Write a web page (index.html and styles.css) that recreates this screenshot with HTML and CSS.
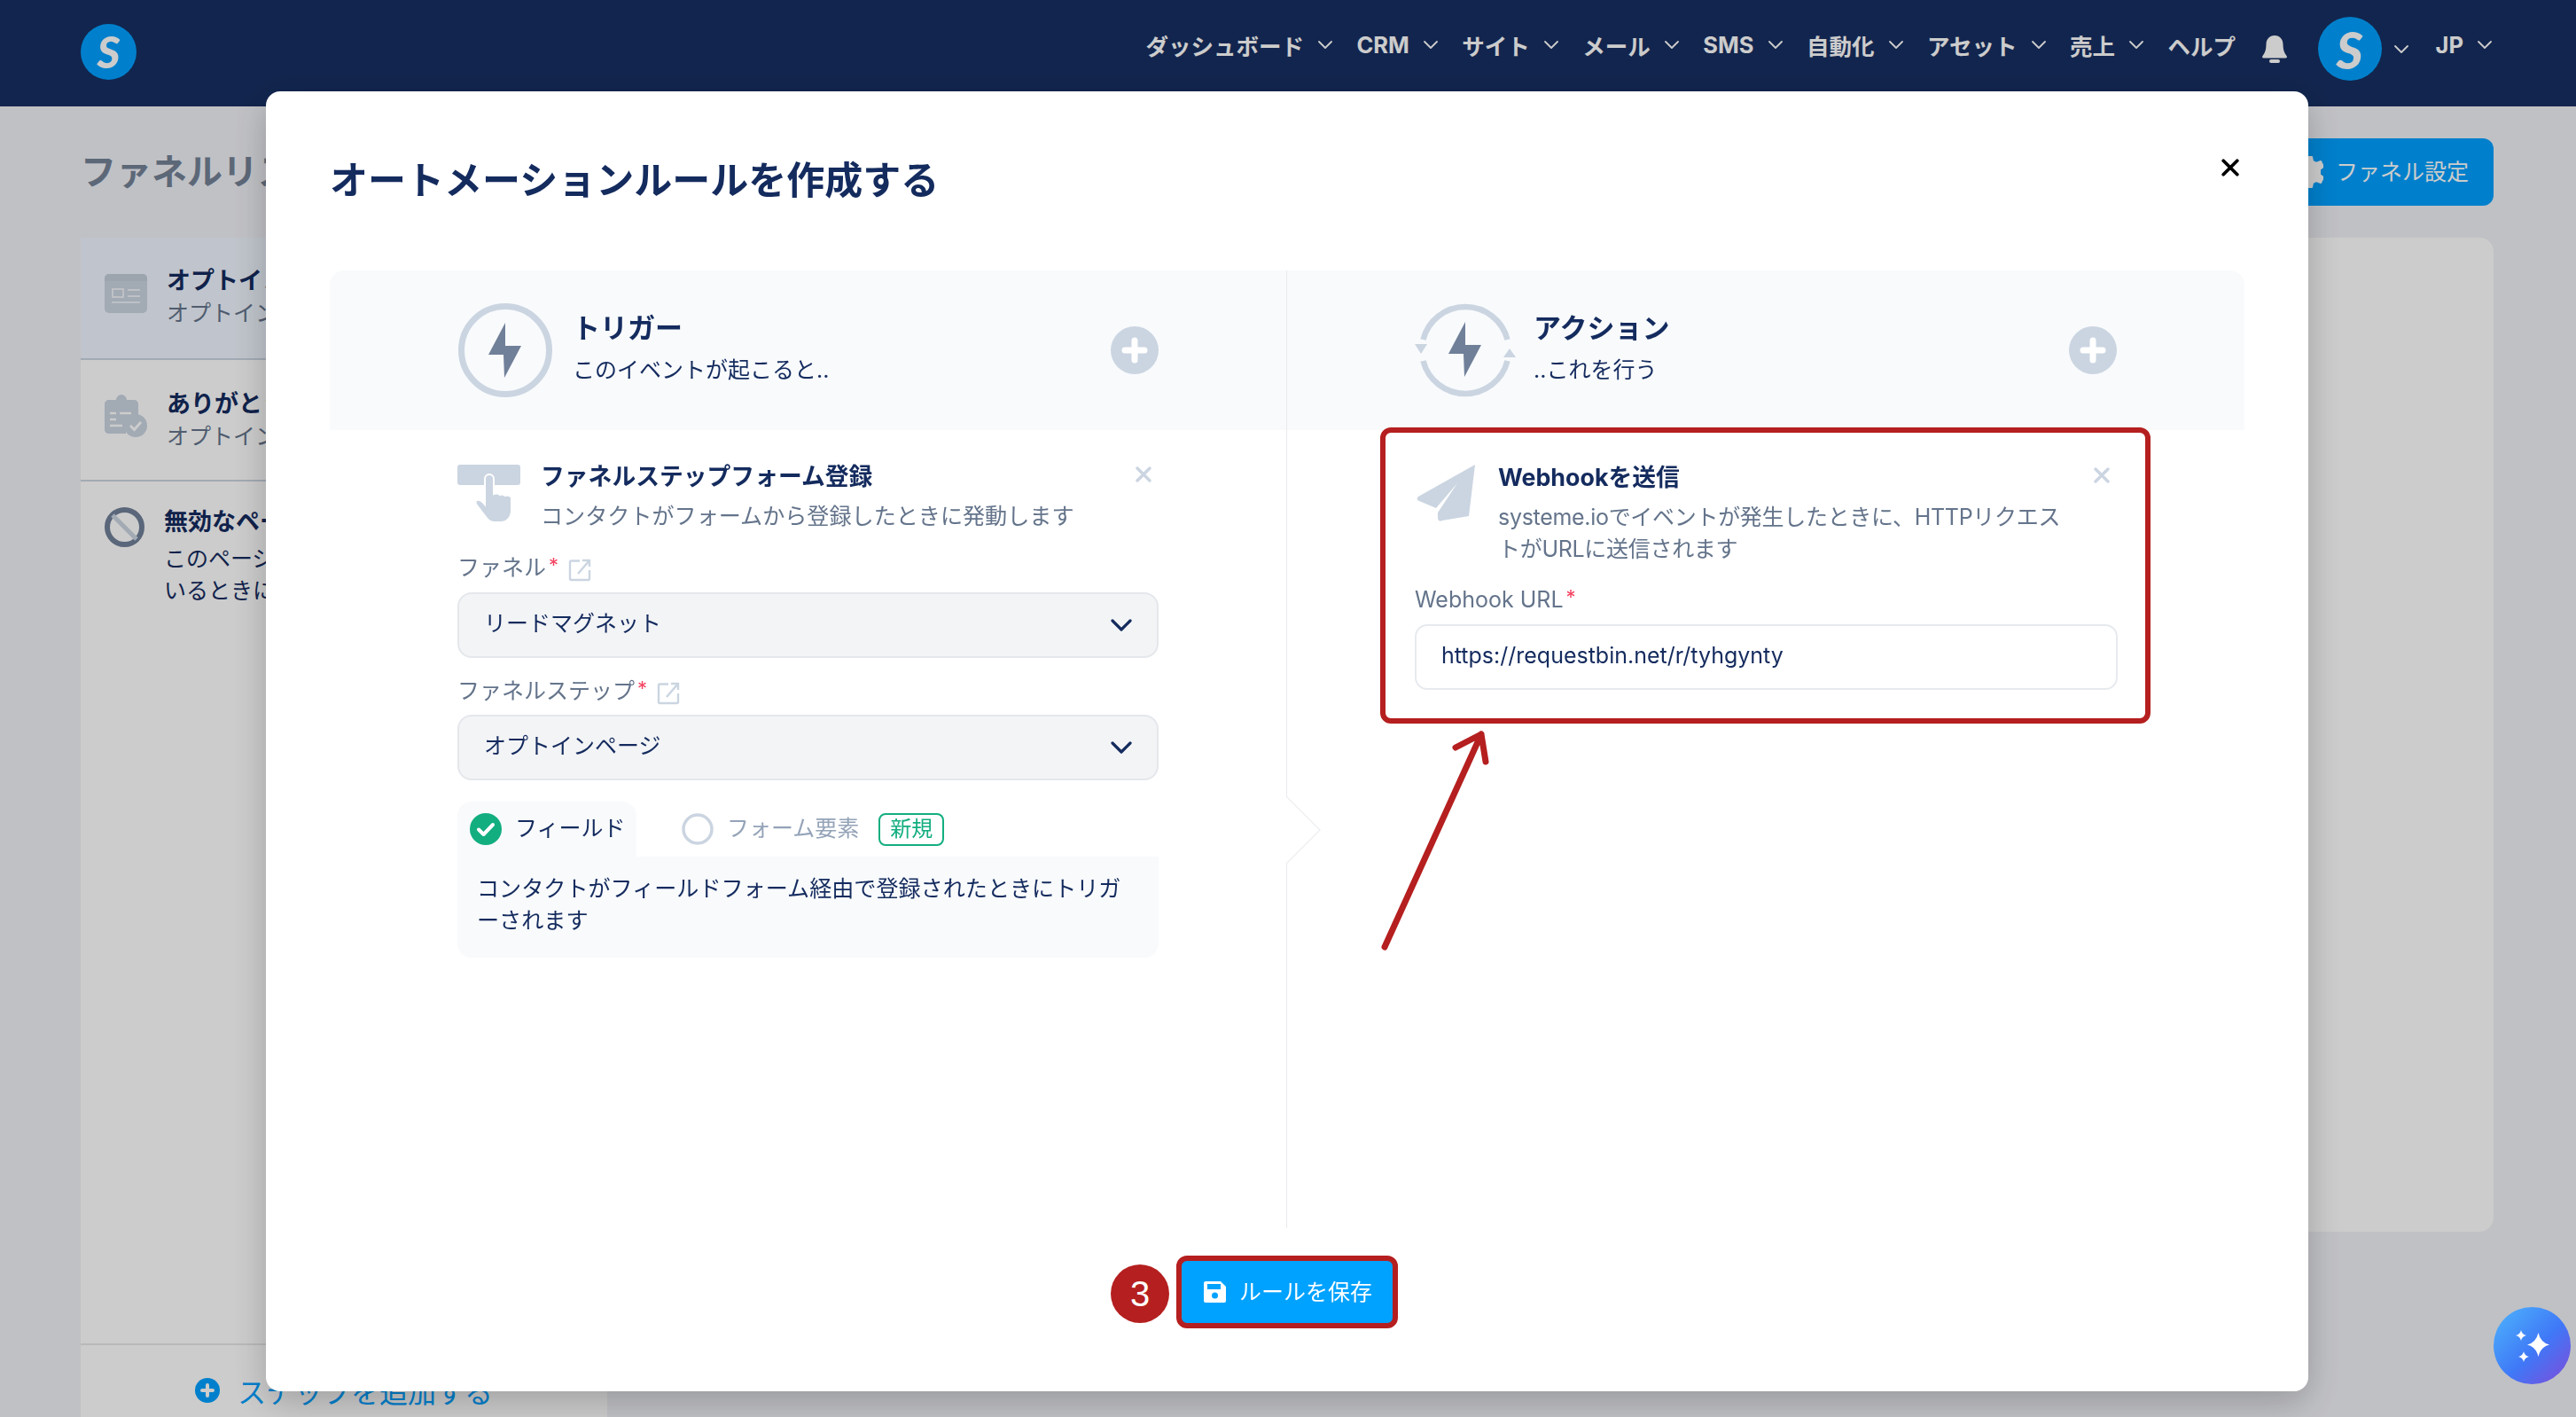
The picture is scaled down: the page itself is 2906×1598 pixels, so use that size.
FILE: index.html
```html
<!DOCTYPE html>
<html lang="ja">
<head>
    <meta charset="UTF-8">
    <meta name="viewport" content="width=device-width, initial-scale=1.0">
    <title>オートメーションルールを作成する</title>
    <link rel="stylesheet" href="styles.css">
</head>
<body>
    <svg class="icon-defs" aria-hidden="true">
        <symbol id="i-chev" viewBox="0 0 16 9"><polyline points="1,1 8,8 15,1" fill="none" stroke="currentColor" stroke-width="1.800" stroke-linecap="round" stroke-linejoin="round"/></symbol>
        <symbol id="i-close" viewBox="0 0 18 18"><path d="M2 2L16 16M16 2L2 16" fill="none" stroke="currentColor" stroke-width="3.400" stroke-linecap="round"/></symbol>
        <symbol id="i-plus" viewBox="0 0 54 54"><circle cx="27" cy="27" r="27" fill="#cbd5e1"/><path d="M27 16V38M16 27H38" stroke="#fff" stroke-width="7" stroke-linecap="round"/></symbol>
        <symbol id="i-ext" viewBox="0 0 26 26"><path d="M13 2.500H3.500a1.500 1.500 0 0 0-1.500 1.500V22.500A1.500 1.500 0 0 0 3.500 24H22.500A1.500 1.500 0 0 0 24 22.500V13M24 2L11 17M16 2H24V9" fill="none" stroke="#cbd5e1" stroke-width="2.400"/></symbol>
        <symbol id="i-select" viewBox="0 0 24 14"><polyline points="2,2 12,12 22,2" fill="none" stroke="#142b5e" stroke-width="3.200" stroke-linecap="round" stroke-linejoin="round"/></symbol>
    </svg>

    <header class="topbar">
        <div class="logo">S</div>
        <nav class="nav">
            <div class="nav-item">ダッシュボード<svg class="chev"><use href="#i-chev"/></svg></div>
            <div class="nav-item">CRM<svg class="chev"><use href="#i-chev"/></svg></div>
            <div class="nav-item">サイト<svg class="chev"><use href="#i-chev"/></svg></div>
            <div class="nav-item">メール<svg class="chev"><use href="#i-chev"/></svg></div>
            <div class="nav-item">SMS<svg class="chev"><use href="#i-chev"/></svg></div>
            <div class="nav-item">自動化<svg class="chev"><use href="#i-chev"/></svg></div>
            <div class="nav-item">アセット<svg class="chev"><use href="#i-chev"/></svg></div>
            <div class="nav-item">売上<svg class="chev"><use href="#i-chev"/></svg></div>
            <div class="nav-item">ヘルプ</div>
            <svg class="bell" viewBox="0 0 30 33"><path d="M15 1c-6 0-9.500 4.500-9.500 10 0 6-1.500 10-4 13-1 1.300-.3 2.500 1 2.500h25c1.300 0 2-1.200 1-2.500-2.500-3-4-7-4-13C24.500 5.500 21 1 15 1z" fill="#fff"/><rect x="9" y="28" width="12" height="4" rx="2" fill="#fff"/></svg>
            <div class="nav-item user"><div class="avatar">S</div><svg class="chev"><use href="#i-chev"/></svg></div>
            <div class="nav-item">JP<svg class="chev"><use href="#i-chev"/></svg></div>
        </nav>
    </header>

    <div class="page-head">
        <h1>ファネルリスト</h1>
        <button class="settings-btn">
            <svg class="gear" viewBox="0 0 34 36"><path d="M14 1h7l1 5 4 2 5-2 3 6-4 3v6l4 3-3 6-5-2-4 2-1 5h-7l-1-5-4-2-5 2-3-6 4-3v-6l-4-3 3-6 5 2 4-2z" fill="#fff" stroke="#fff" stroke-width="2" stroke-linejoin="round"/></svg>
            <span class="btn-text">ファネル設定</span>
        </button>
    </div>

    <div class="page-main">
        <aside class="sidebar">
            <div class="step step-active">
                <svg class="step-icon form-icon" viewBox="0 0 48 44"><rect width="48" height="44" rx="5" fill="#cbd5e1"/><path d="M0 5a5 5 0 0 1 5-5h38a5 5 0 0 1 5 5v3H0z" fill="#c3cdda"/><rect x="9" y="17" width="12" height="9" fill="none" stroke="#eef2f7" stroke-width="2"/><path d="M26 18H40M26 25H40M8 32H40" stroke="#eef2f7" stroke-width="2"/></svg>
                <div class="step-text">
                    <div class="step-name">オプトインページ</div>
                    <div class="step-type">オプトインページ</div>
                </div>
            </div>
            <div class="step step-thanks">
                <svg class="step-icon" viewBox="0 0 48 48"><path d="M5 6h8c0-3 3-6 6-6s6 3 6 6h8c3 0 5 2 5 5v14c-8 0-14 6-14 16v3H5c-3 0-5-2-5-5V11c0-3 2-5 5-5z" fill="#cbd5e1"/><path d="M6 21H13M17 21H30M6 28H13M6 35H20" stroke="#fff" stroke-width="2.500"/><circle cx="35" cy="35" r="13" fill="#cbd5e1"/><path d="M29 35l4.500 4.500L41 31" fill="none" stroke="#fff" stroke-width="3"/></svg>
                <div class="step-text">
                    <div class="step-name">ありがとうページ</div>
                    <div class="step-type">オプトインページ</div>
                </div>
            </div>
            <div class="step step-inactive">
                <svg class="step-icon ban-icon" viewBox="0 0 45 45"><circle cx="22.500" cy="22.500" r="19.500" fill="none" stroke="#718099" stroke-width="6"/><path d="M9 9L36 36" stroke="#cbd5e1" stroke-width="5"/></svg>
                <div class="step-text">
                    <div class="step-name">無効なページ</div>
                    <div class="step-desc">このページはファネルが無効になって<br>いるときに表示されます</div>
                </div>
            </div>
            <div class="add-step">
                <svg class="add-dot" viewBox="0 0 28 28"><circle cx="14" cy="14" r="14" fill="#00a0ff"/><path d="M14 8V20M8 14H20" stroke="#fff" stroke-width="4" stroke-linecap="round"/></svg>
                <span>ステップを追加する</span>
            </div>
        </aside>
        <section class="content-card"></section>
    </div>

    <div class="overlay">
        <div class="modal">
            <div class="modal-head">
                <h2>オートメーションルールを作成する</h2>
                <svg class="modal-close"><use href="#i-close"/></svg>
            </div>

            <div class="rule-grid">
                <div class="rule-col">
                    <div class="col-head">
                        <svg class="col-icon" viewBox="0 0 106 106"><circle cx="53" cy="53" r="49.500" fill="none" stroke="#cbd5e1" stroke-width="7"/><path d="M53 22L34 58H51L52 84L71 48H53z" fill="#718099"/></svg>
                        <div class="col-title">
                            <h3>トリガー</h3>
                            <p>このイベントが起こると..</p>
                        </div>
                        <svg class="col-plus"><use href="#i-plus"/></svg>
                    </div>
                    <div class="col-body">
                        <div class="card-head">
                            <svg class="card-icon" viewBox="0 0 71 66"><rect width="71" height="23" rx="3" fill="#cbd5e1"/><path d="M31 16a5 5 0 0 1 10 0v17c3-1 6 0 7 1 2-1 5 0 6 1 2-1 6 0 7 2v15c0 7-5 13-12 13h-7c-5 0-8-3-10-6L22 46c-2-3-2-5 0-6 2-1 5 0 9 5z" fill="#cbd5e1" stroke="#fff" stroke-width="2"/></svg>
                            <div class="card-text">
                                <h4>ファネルステップフォーム登録</h4>
                                <p>コンタクトがフォームから登録したときに発動します</p>
                            </div>
                            <svg class="card-close"><use href="#i-close"/></svg>
                        </div>
                        <div class="field-label">ファネル<span class="req">*</span><svg class="ext"><use href="#i-ext"/></svg></div>
                        <div class="select"><span class="select-text">リードマグネット</span><svg class="select-chev"><use href="#i-select"/></svg></div>
                        <div class="field-label second">ファネルステップ<span class="req">*</span><svg class="ext"><use href="#i-ext"/></svg></div>
                        <div class="select"><span class="select-text">オプトインページ</span><svg class="select-chev"><use href="#i-select"/></svg></div>
                        <div class="tabs">
                            <div class="tab tab-on">
                                <svg class="tab-radio" viewBox="0 0 36 36"><circle cx="18" cy="18" r="18" fill="#13ae80"/><path d="M10 18.500l5.500 5.500L26 13" fill="none" stroke="#fff" stroke-width="4" stroke-linecap="round" stroke-linejoin="round"/></svg>
                                <span class="tab-text">フィールド</span>
                            </div>
                            <div class="tab tab-off">
                                <svg class="tab-radio" viewBox="0 0 36 36"><circle cx="18" cy="18" r="16" fill="#fff" stroke="#cbd5e1" stroke-width="3.500"/></svg>
                                <span class="tab-text">フォーム要素</span>
                                <span class="badge">新規</span>
                            </div>
                        </div>
                        <div class="tab-panel">コンタクトがフィールドフォーム経由で登録されたときにトリガーされます</div>
                    </div>
                </div>

                <div class="rule-col col-right">
                    <div class="col-head">
                        <svg class="col-icon action-icon" viewBox="0 0 114 108"><path d="M9.500 42A49 49 0 0 1 104.500 42M104.500 66A49 49 0 0 1 9.500 66" fill="none" stroke="#cbd5e1" stroke-width="6.500"/><path d="M0 47H14L7 58zM100 62H114L107 52z" fill="#cbd5e1"/><path d="M57 22L38 58H55L56 84L75 48H57z" fill="#718099"/></svg>
                        <div class="col-title">
                            <h3>アクション</h3>
                            <p>..これを行う</p>
                        </div>
                        <svg class="col-plus"><use href="#i-plus"/></svg>
                    </div>
                    <div class="col-body">
                        <div class="action-card">
                            <div class="card-head">
                                <svg class="card-icon plane-icon" viewBox="0 0 71 66"><path d="M68 1L4 37Q1 40 5 42L24 50L48 22L26 55V62Q27 66 31 64L61 59z" fill="#cbd5e1"/></svg>
                                <div class="card-text">
                                    <h4>Webhookを送信</h4>
                                    <p>systeme.ioでイベントが発生したときに、HTTPリクエストがURLに送信されます</p>
                                </div>
                                <svg class="card-close"><use href="#i-close"/></svg>
                            </div>
                            <div class="field-label url-label">Webhook URL<span class="req">*</span></div>
                            <div class="text-input">https://requestbin.net/r/tyhgynty</div>
                        </div>
                    </div>
                    <svg class="notch" viewBox="0 0 39 76"><path d="M0 1L37 38L0 75z" fill="#fff"/><polyline points="1,1 38,38 1,75" fill="none" stroke="#eef0f3" stroke-width="1.500"/></svg>
                    <svg class="red-arrow" viewBox="0 0 130 255"><path d="M7 248L116 8M87 23L116 8L121 39" fill="none" stroke="#b51f1f" stroke-width="7" stroke-linecap="round" stroke-linejoin="round"/></svg>
                </div>
            </div>

            <div class="modal-foot">
                <div class="save-wrap">
                    <span class="step-no">3</span>
                    <button class="save-btn">
                        <svg class="save-icon" viewBox="0 0 25 24"><path d="M0 2a2 2 0 0 1 2-2h17l6 6v16a2 2 0 0 1-2 2H2a2 2 0 0 1-2-2z" fill="#fff"/><rect x="4" y="3" width="15" height="6" fill="#00a2ff"/><circle cx="12.500" cy="16" r="3.500" fill="#00a2ff"/></svg>
                        <span class="btn-text">ルールを保存</span>
                    </button>
                </div>
            </div>
        </div>
    </div>

    <div class="ai-btn">
        <svg viewBox="0 0 38 36" width="38" height="36"><path d="M25.500 3Q28 14 38 16.500Q28 19 25.500 30Q23 19 13 16.500Q23 14 25.500 3zM6 0Q7 5 12 6Q7 7 6 12Q5 7 0 6Q5 5 6 0zM9 24Q10 29 15 30Q10 31 9 36Q8 31 3 30Q8 29 9 24z" fill="#fff"/></svg>
    </div>
</body>
</html>
```

FILE: styles.css
```css
* {
    box-sizing: border-box;
}
html, body {
    height: 100%;
}
body {
    margin: 0;
    overflow: hidden;
    font-family: Inter, "Noto Sans CJK JP", sans-serif;
    background-color: #f1f2f7;
    color: #142b5e;
}
h1, h2, h3, h4, p {
    margin: 0;
}
.icon-defs {
    display: none;
}

/* Barre du haut */
.topbar {
    display: flex;
    align-items: center;
    height: 120px;
    padding: 0 95px 10px 91px;
    background-color: #172f62;
}
.logo {
    display: flex;
    justify-content: center;
    align-items: center;
    width: 63px;
    height: 63px;
    margin-top: 6px;
    border-radius: 50%;
    background: #00a0ff;
    color: #fff;
    font-family: Lato, sans-serif;
    font-size: 50px;
    font-weight: 900;
    font-style: italic;
}
.nav {
    display: flex;
    align-items: center;
    gap: 27.5px;
    margin-left: auto;
    color: #fff;
    font-size: 25.5px;
    font-weight: 700;
}
.nav-item {
    display: flex;
    align-items: center;
    gap: 16px;
    margin-top: -9px;
}
.nav-item.user {
    margin-top: 0;
    margin-right: 3.5px;
    gap: 14px;
}
.chev {
    flex: none;
    width: 16px;
    height: 9px;
    color: #fff;
}
.bell {
    width: 30px;
    height: 33px;
    margin-left: 1.5px;
    margin-right: 6px;
}
.avatar {
    display: flex;
    justify-content: center;
    align-items: center;
    width: 72px;
    height: 72px;
    border-radius: 50%;
    background: #00a0ff;
    color: #fff;
    font-family: Lato, sans-serif;
    font-size: 58px;
    font-weight: 900;
    font-style: italic;
}

/* Page derriere le modal */
.page-head {
    display: flex;
    justify-content: space-between;
    align-items: center;
    height: 76px;
    margin: 36px 93px 36px 91px;
}
.page-head h1 {
    margin-top: -6px;
    color: #748297;
    font-size: 40px;
    font-weight: 700;
}
.settings-btn {
    display: flex;
    align-items: center;
    gap: 14px;
    height: 76px;
    padding: 0 28px;
    border: none;
    border-radius: 12px;
    background: #00a0ff;
    color: #fff;
    font-family: inherit;
    font-size: 25px;
}
.btn-text {
    margin-top: -4px;
}
.gear {
    width: 34px;
    height: 36px;
}
.page-main {
    display: flex;
    gap: 24px;
    margin: 0 93px 0 91px;
}
.sidebar {
    display: flex;
    flex-direction: column;
    flex: none;
    width: 594px;
    height: 1330px;
    background: #fff;
}
.step {
    display: flex;
    align-items: flex-start;
    gap: 22px;
    padding: 32px 27px 0;
    border-bottom: 2px solid #cbd5e1;
}
.step-active {
    height: 138px;
    background: #f0f6ff;
}
.step-thanks {
    height: 137px;
    padding-top: 33px;
}
.step-inactive {
    flex: 1;
    padding-top: 29px;
    border-bottom: none;
}
.step-icon {
    flex: none;
    width: 48px;
    height: 48px;
    margin-top: 6px;
}
.form-icon {
    height: 44px;
    margin-top: 9px;
}
.ban-icon {
    width: 45px;
    height: 45px;
    margin-top: 0;
}
.step-name {
    font-size: 27px;
    font-weight: 700;
    line-height: 34px;
}
.step-type {
    margin-top: 2px;
    color: #64748b;
    font-size: 25px;
    line-height: 34px;
}
.step-desc {
    margin-top: 6px;
    font-size: 25px;
    line-height: 36px;
}
.add-step {
    display: flex;
    justify-content: center;
    align-items: center;
    gap: 20px;
    height: 83px;
    padding-top: 20px;
    border-top: 2px solid #e8e8e8;
    color: #00a0ff;
    font-size: 32px;
}
.add-dot {
    width: 28px;
    height: 28px;
}
.content-card {
    flex: 1;
    height: 1121px;
    border-radius: 16px;
    background: #fff;
}

/* Modal */
.overlay {
    position: fixed;
    top: 0;
    left: 0;
    width: 100%;
    height: 100%;
    display: flex;
    justify-content: center;
    padding: 103px 2px 29px 0;
    background: rgba(0, 0, 0, 0.2);
}
.modal {
    display: flex;
    flex-direction: column;
    width: 2304px;
    padding: 70px 72px 71px 72px;
    border-radius: 16px;
    background: #fff;
    box-shadow: 0 12px 40px rgba(0, 0, 0, 0.22);
}
.modal-head {
    display: flex;
    justify-content: space-between;
    align-items: flex-start;
    height: 132px;
}
.modal-head h2 {
    font-size: 43px;
    font-weight: 700;
    line-height: 60px;
}
.modal-close {
    width: 20px;
    height: 20px;
    margin: 6px 6px 0 0;
    color: #000;
}
.rule-grid {
    display: grid;
    grid-template-columns: 1079px 1fr;
    flex: 1;
}
.rule-col {
    position: relative;
}
.col-right {
    border-left: 1px solid #e8eaee;
}
.col-head {
    display: flex;
    align-items: center;
    height: 180px;
    padding: 0 144px 0 145px;
    background: #f8fafc;
}
.rule-col:first-child .col-head {
    border-top-left-radius: 16px;
}
.col-right .col-head {
    border-top-right-radius: 16px;
    padding: 0 144px 0 144px;
}
.col-icon {
    flex: none;
    width: 106px;
    height: 106px;
    margin-right: 23px;
}
.action-icon {
    width: 114px;
    height: 108px;
    margin-right: 20px;
}
.col-title {
    flex: 1;
    margin-top: -6px;
}
.col-title h3 {
    font-size: 31px;
    font-weight: 700;
    line-height: 40px;
}
.col-title p {
    margin-top: 9px;
    font-size: 25px;
    line-height: 36px;
}
.col-plus {
    width: 54px;
    height: 54px;
}
.col-body {
    padding: 34px 144px 0 144px;
}
.col-right .col-body {
    padding: 0 106px 0 105px;
}
.card-head {
    display: flex;
    align-items: flex-start;
}
.card-icon {
    flex: none;
    width: 71px;
    height: 66px;
    margin: 5px 23px 0 0;
}
.plane-icon {
    margin-top: 3px;
}
.card-text {
    flex: 1;
}
.card-text h4 {
    font-size: 26.8px;
    font-weight: 700;
    line-height: 36px;
}
.card-text p {
    margin-top: 9px;
    color: #64748b;
    font-size: 25.1px;
    line-height: 36px;
}
.action-card .card-text p {
    max-width: 650px;
    font-size: 25px;
    letter-spacing: -0.3px;
}
.card-close {
    flex: none;
    width: 18px;
    height: 18px;
    margin: 7px 8px 0 0;
    color: #cbd5e1;
}
.action-card .card-close {
    margin-right: 9px;
}
.field-label {
    display: flex;
    align-items: flex-start;
    margin: 22px 0 10px;
    color: #64748b;
    font-size: 25px;
    line-height: 36px;
}
.field-label.second {
    margin-top: 19px;
    margin-bottom: 9px;
}
.req {
    margin-left: 3px;
    color: #f43f5e;
    font-size: 22px;
    line-height: 30px;
}
.ext {
    width: 26px;
    height: 26px;
    margin: 8px 0 0 11px;
}
.select {
    display: flex;
    justify-content: space-between;
    align-items: center;
    height: 74px;
    padding: 0 28px;
    border: 2px solid #e4e7eb;
    border-radius: 16px;
    background: #f3f4f6;
    font-size: 25px;
}
.select-text {
    margin-top: -8px;
}
.select-chev {
    width: 24px;
    height: 14px;
}
.tabs {
    display: flex;
    align-items: stretch;
    height: 62px;
    margin-top: 24px;
}
.tab {
    display: flex;
    align-items: center;
    gap: 15px;
    font-size: 25px;
}
.tab-text {
    margin-top: -7px;
}
.tab-on {
    width: 202px;
    padding-left: 14px;
    border-radius: 16px 16px 0 0;
    background: #f8fafc;
}
.tab-off {
    margin-left: 51px;
    color: #94a3b8;
}
.tab-radio {
    width: 36px;
    height: 36px;
}
.badge {
    height: 37px;
    margin-left: 7px;
    padding: 0 11px;
    border: 2px solid #13ae80;
    border-radius: 8px;
    color: #13ae80;
    font-size: 24px;
    line-height: 31px;
}
.tab-panel {
    padding: 18px 22px 24px;
    border-radius: 0 0 16px 16px;
    background: #f8fafc;
    font-size: 25.1px;
    line-height: 36px;
}
.action-card {
    margin-top: -3px;
    padding: 32px 31px 32px 33px;
    border: 6px solid #b51f1f;
    border-radius: 12px;
    background: #fff;
}
.url-label {
    margin-top: 21px;
}
.text-input {
    height: 74px;
    padding: 0 28px;
    border: 2px solid #e7eaee;
    border-radius: 14px;
    font-size: 25px;
    line-height: 67px;
}
.notch {
    position: absolute;
    left: -1px;
    top: 593px;
    width: 39px;
    height: 76px;
}
.red-arrow {
    position: absolute;
    left: 103px;
    top: 515px;
    width: 130px;
    height: 255px;
}
.modal-foot {
    display: flex;
    justify-content: center;
    padding-top: 31px;
}
.save-wrap {
    position: relative;
}
.step-no {
    position: absolute;
    left: -74px;
    top: 10px;
    display: flex;
    justify-content: center;
    align-items: center;
    width: 66px;
    height: 66px;
    border-radius: 50%;
    background: #b51f1f;
    color: #fff;
    font-family: "Liberation Sans", sans-serif;
    font-size: 40px;
}
.save-btn {
    display: flex;
    align-items: center;
    gap: 15px;
    width: 250px;
    height: 82px;
    padding: 0 20px 0 25px;
    border: 6px solid #b51f1f;
    border-radius: 12px;
    background: #00a2ff;
    color: #fff;
    font-family: inherit;
    font-size: 25px;
    white-space: nowrap;
}
.save-icon {
    flex: none;
    width: 25px;
    height: 24px;
}
.ai-btn {
    position: fixed;
    left: 2813px;
    top: 1474px;
    display: flex;
    justify-content: center;
    align-items: center;
    width: 87px;
    height: 87px;
    border-radius: 50%;
    background: linear-gradient(135deg, #4cb0fb 5%, #3f78f7 55%, #7a4fdc 95%);
}
```
